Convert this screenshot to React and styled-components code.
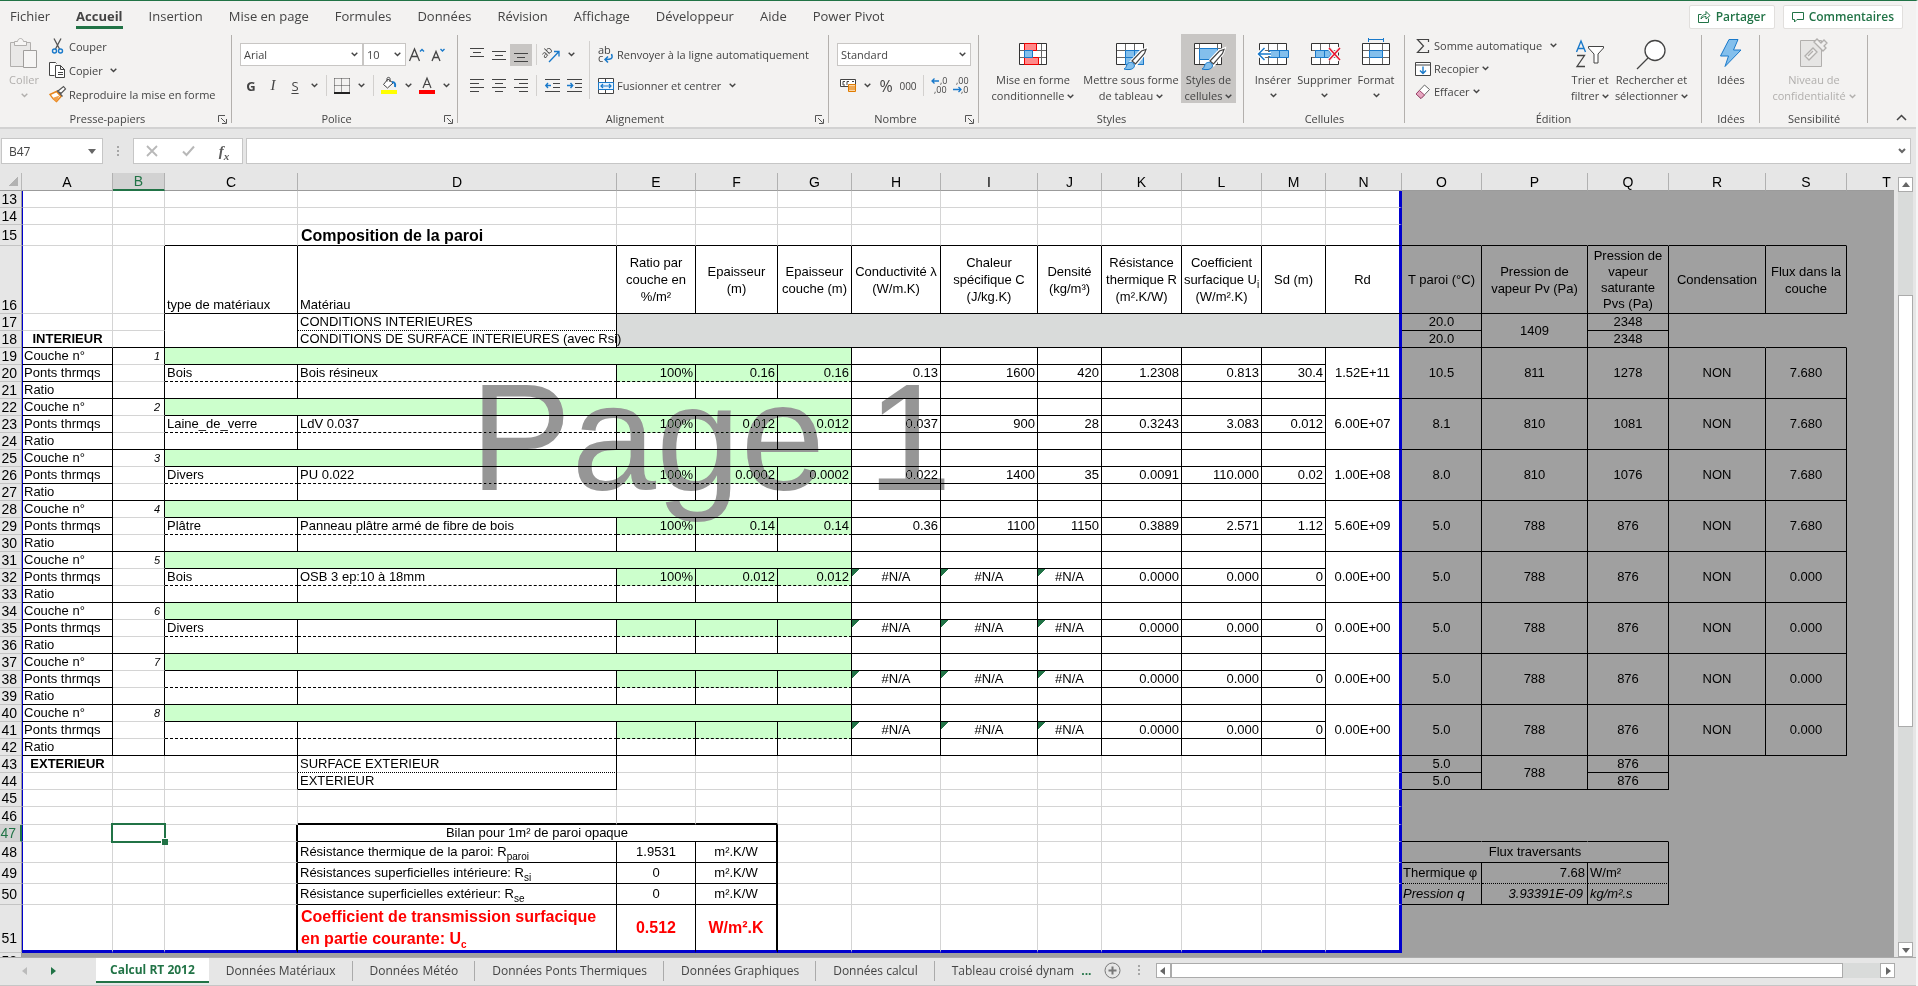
import React from 'react'
import styled, { createGlobalStyle, css } from 'styled-components'

const ui = `'Open Sans', 'Noto Sans', sans-serif`
const sheetFont = `'Liberation Sans', Arial, sans-serif`
const green = '#217346'
const blue = '#1979ca'

const GlobalStyle = createGlobalStyle`
*{ box-sizing: border-box; }
body{
  margin: 0;
  background: #e6e6e6;
  font-family: ${ui};
  font-size: 12px;
  color: #444;
}
button, input, select{
  font: inherit;
  color: inherit;
}
svg{ overflow: visible; }
`

const Window = styled.div`
display: flex;
flex-direction: column;
height: 100vh;
min-height: 600px;
overflow: hidden;
border-top: 1px solid ${green};
border-right: 2px solid #f6f6f6;
`

/* ---------- ribbon ---------- */

const Menu = styled.nav`
display: flex;
align-items: center;
flex-shrink: 0;
height: 33px;
padding: 0 13px 2px 10px;
background: #f3f2f1;
`
const MenuTabs = styled.div`
display: flex;
gap: 26px;
flex: 1;
font-size: 13px;
`
const MenuTab = styled.a`
position: relative;
padding-bottom: 2px;
line-height: 22px;
color: #444;
text-decoration: none;
white-space: nowrap;
font-weight: ${({ $active }) => ($active ? 700 : 400)};
${({ $active }) => $active && css`
&::after{
  content: '';
  position: absolute;
  left: 0;
  right: 0;
  bottom: 0;
  height: 3px;
  background: ${green};
}
`}
`
const TopButton = styled.button`
display: flex;
align-items: center;
gap: 5px;
height: 24px;
margin-left: 8px;
padding: 0 8px;
border: 1px solid #e1dfdd;
border-radius: 2px;
background: #fff;
color: ${green};
font-size: 12px;
font-weight: 600;
white-space: nowrap;
`
const Ribbon = styled.div`
display: flex;
height: 95px;
flex-shrink: 0;
background: #f3f2f1;
border-bottom: 2px solid #d2d2d2;
`
const Group = styled.section`
display: flex;
flex-direction: column;
width: ${({ $w }) => $w}px;
height: 93px;
flex-shrink: 0;
background: linear-gradient(#b3b0ad, #b3b0ad) no-repeat right 1px / 1px 88px;
`
const GroupBody = styled.div`
display: flex;
flex: 1;
padding: 0 ${({ $pad }) => $pad || 0}px;
`
const GroupFoot = styled.div`
display: flex;
align-items: center;
height: 16px;
padding-right: ${({ $launcher }) => ($launcher ? 2 : 0)}px;
font-size: 11px;
line-height: 16px;
`
const GroupLabel = styled.span`
flex: 1;
text-align: center;
`
const Launcher = styled.button`
display: flex;
padding: 3px;
border: 0;
background: none;
`
const Lines = styled.div`
display: flex;
flex-direction: column;
`
const Line = styled.div`
display: flex;
align-items: center;
height: 31px;
`
const ToolButton = styled.button`
display: flex;
align-items: center;
justify-content: center;
width: 22px;
height: 22px;
padding: 0;
border: 0;
background: ${({ $on }) => ($on ? '#c8c6c4' : 'none')};
`
const ArrowButton = styled(ToolButton)`
width: 16px;
`
const TextButton = styled.button`
display: flex;
align-items: center;
gap: 3px;
height: ${({ $h }) => $h || 24}px;
padding: 0;
border: 0;
background: none;
font-size: 11px;
white-space: nowrap;
`
const BigButton = styled.button`
display: flex;
flex-direction: column;
align-items: center;
width: ${({ $w }) => $w}px;
height: 69px;
padding: 4px 0 0;
border: 0;
background: ${({ $on }) => ($on ? '#c8c6c4' : 'none')};
color: ${({ $off }) => ($off ? '#b1afad' : '#444')};
font-size: 11px;
line-height: 16px;
white-space: nowrap;
& > svg{
  height: 34px;
  flex-shrink: 0;
}
`
const BigText = styled.span`
display: flex;
align-items: center;
gap: 3px;
height: 16px;
`
const Rule = styled.span`
width: 1px;
height: ${({ $h }) => $h || 21}px;
margin: 0 4px;
background: #d2d0ce;
flex-shrink: 0;
`
const SelectBox = styled.label`
position: relative;
display: block;
width: ${({ $w }) => $w}px;
& > svg{
  position: absolute;
  right: 5px;
  top: 9px;
  pointer-events: none;
}
`
const Select = styled.select`
width: 100%;
height: 23px;
padding: 0 3px;
appearance: none;
border: 1px solid #c8c6c4;
border-radius: 0;
background: #fff;
font-size: 11px;
`
const FontMark = styled.span`
font-size: ${({ $size }) => $size || 13}px;
font-weight: ${({ $bold }) => ($bold ? 700 : 400)};
font-style: ${({ $italic }) => ($italic ? 'italic' : 'normal')};
font-family: ${({ $serif }) => ($serif ? `'Liberation Serif', serif` : 'inherit')};
text-decoration: ${({ $under }) => ($under ? 'underline' : 'none')};
text-underline-offset: 2px;
`
const Collapse = styled.button`
margin: auto 9px 0 auto;
padding: 0 0 2px;
border: 0;
background: none;
`

/* ---------- formula bar ---------- */

const FormulaBar = styled.div`
display: flex;
align-items: center;
flex-shrink: 0;
height: 44px;
padding: 0 5px 0 1px;
`
const NameBox = styled.label`
position: relative;
width: 102px;
& > svg{
  position: absolute;
  right: 7px;
  top: 9px;
}
`
const BarInput = styled.input`
display: block;
width: 100%;
height: 26px;
padding: 0 7px;
border: 1px solid #c6c6c6;
border-radius: 0;
background: #fff;
font-size: 12px;
outline: none;
`
const BarDots = styled.span`
width: 2px;
height: 11px;
margin: 0 14px;
background: repeating-linear-gradient(#a6a6a6 0 2px, transparent 2px 4px);
`
const BarButtons = styled.div`
display: flex;
width: 110px;
height: 26px;
border: 1px solid #c6c6c6;
background: #fff;
`
const BarButton = styled.button`
display: flex;
align-items: center;
justify-content: center;
flex: 1;
padding: 0;
border: 0;
background: none;
color: #5a5a5a;
font-family: 'Liberation Serif', serif;
font-size: 15px;
font-style: italic;
font-weight: 700;
sub{
  font-size: 11px;
  line-height: 0;
}
`
const FormulaBox = styled.label`
position: relative;
flex: 1;
margin-left: 3px;
& > svg{
  position: absolute;
  right: 5px;
  top: 10px;
}
`

/* ---------- sheet ---------- */

const Work = styled.div`
display: flex;
flex: 1;
min-height: 0;
`
const SheetArea = styled.div`
position: relative;
flex: 1;
min-width: 0;
overflow: hidden;
background: #a0a0a0;
`
const Table = styled.table`
width: 0;
table-layout: fixed;
border-collapse: separate;
border-spacing: 0;
font-family: ${sheetFont};
font-size: 13px;
line-height: 16px;
color: #000;
`
const Corner = styled.td`
padding: 0;
background: linear-gradient(135deg, transparent 50%, #b2b2b2 50%) no-repeat 9px 4px / 9px 9px #e6e6e6;
border-right: 1px solid #b8b8b8;
border-bottom: 1px solid #9b9b9b;
`
const ColHead = styled.th`
height: 18px;
padding: 0;
overflow: hidden;
font-size: 14px;
font-weight: 400;
line-height: 16px;
color: ${({ $on }) => ($on ? green : '#000')};
background: ${({ $on }) => ($on ? '#d2d2d2' : '#e6e6e6')};
border-right: 1px solid #b1b1b1;
border-bottom: ${({ $on }) => ($on ? `2px solid ${green}` : '1px solid #9b9b9b')};
`
const RowHead = styled.th`
height: ${({ $h }) => $h}px;
padding: 0 4px ${({ $h }) => ($h === 48 ? 6 : 0)}px 0;
overflow: hidden;
font-size: 14px;
font-weight: 400;
text-align: right;
vertical-align: ${({ $h }) => ($h === 21 ? 'middle' : 'bottom')};
color: ${({ $on }) => ($on ? green : '#000')};
background: ${({ $on }) => ($on ? '#d2d2d2' : '#e6e6e6')};
border-bottom: 1px solid #c4c4c4;
border-right: ${({ $on }) => ($on ? `2px solid ${green}` : '1px solid #9b9b9b')};
`
const Cell = styled.td`
position: relative;
padding: 0 ${({ $pad }) => $pad || 2}px;
white-space: pre;
text-align: ${({ $align }) => $align || 'left'};
vertical-align: ${({ $valign }) => $valign || 'bottom'};
font-size: ${({ $size }) => $size || 13}px;
font-weight: ${({ $bold }) => ($bold ? 700 : 400)};
font-style: ${({ $italic }) => ($italic ? 'italic' : 'normal')};
line-height: ${({ $lh }) => $lh || 16}px;
color: ${({ $color }) => $color || '#000'};
background: ${({ $bg }) => $bg};
border-right: ${({ $right }) => $right};
border-bottom: ${({ $bottom }) => $bottom};
border-left: ${({ $left }) => $left || 0};
sub{
  font-size: 10px;
  line-height: 0;
}
${({ $error }) => $error && css`
background: linear-gradient(135deg, ${green} 5px, #fff 5px);
`}
`
const Selection = styled.span`
position: absolute;
inset: -2px;
z-index: 1;
border: 2px solid ${green};
&::after{
  content: '';
  position: absolute;
  right: -4px;
  bottom: -4px;
  width: 6px;
  height: 6px;
  border: 1px solid #fff;
  border-right: 0;
  border-bottom: 0;
  background: ${green};
}
`
const Watermark = styled.div`
position: absolute;
left: 470px;
top: 179px;
font-family: ${sheetFont};
font-size: 152px;
line-height: 170px;
color: #969696;
mix-blend-mode: darken;
pointer-events: none;
`

const VScroll = styled.div`
display: flex;
flex-direction: column;
width: 15px;
margin: 4px 3px 0 4px;
background: #d9dbda;
`
const HScroll = styled.div`
display: flex;
flex: 1;
height: 15px;
margin: 0 21px 0 2px;
background: #d9dbda;
`
const ScrollButton = styled.button`
display: flex;
align-items: center;
justify-content: center;
width: 15px;
height: 15px;
padding: 0;
border: 1px solid #ababab;
background: #fff;
flex-shrink: 0;
`
const Thumb = styled.div`
flex: ${({ $size }) => $size} 0 0;
border: 1px solid #ababab;
background: #fff;
`
const Track = styled.div`
flex: ${({ $size }) => $size} 0 0;
`

const Sheets = styled.footer`
display: flex;
align-items: center;
flex-shrink: 0;
height: 29px;
padding-bottom: 2px;
border-top: 1px solid #ababab;
border-bottom: 1px solid #c6c6c6;
`
const SheetNav = styled.div`
display: flex;
gap: 6px;
width: 96px;
padding-left: 14px;
`
const SheetTab = styled.a`
display: flex;
align-items: center;
height: 24px;
padding: 0 17px;
color: #444;
font-size: 12px;
text-decoration: none;
white-space: nowrap;
background: linear-gradient(#ababab, #ababab) no-repeat right center / 1px 20px;
&:last-of-type{
  padding-right: 7px;
  background: none;
}
${({ $active }) => $active && css`
align-self: flex-start;
height: 25px;
padding: 0 14px;
border-bottom: 2px solid ${green};
background: #fff;
color: ${green};
font-weight: 700;
`}
`
const More = styled.span`
margin-right: 10px;
color: ${green};
font-weight: 700;
`

/* ---------- icons ---------- */

const Chevron = ({ color = '#444' }) => (
  <svg width="7" height="5" viewBox="0 0 7 5" fill="none" stroke={color} strokeWidth="1.4"><path d="M.7.8 3.5 3.6 6.3.8" /></svg>
)
const Triangle = ({ dir, color = '#666' }) => {
  const d = { up: 'M0 6 4 1 8 6z', down: 'M0 2 4 7 8 2z', left: 'M6 0 1 4 6 8z', right: 'M2 0 7 4 2 8z' }[dir]
  return <svg width="8" height="8" viewBox="0 0 8 8"><path d={d} fill={color} /></svg>
}
const LauncherIcon = () => (
  <svg width="9" height="9" viewBox="0 0 9 9" fill="none" stroke="#555"><path d="M.5 7V.5H7M3 3l4.5 4.5M8.5 4v4.5H4" /></svg>
)
const PasteIcon = () => (
  <svg width="28" height="34" viewBox="0 0 28 34" fill="#e9e8e7" stroke="#b1afad">
    <path d="M.5 4.500h20v24H.5z" />
    <path d="M4.500 7.500v-4h3c.5-4 5.500-4 6 0h3v4z" fill="#f6f5f4" />
    <path d="M13.500 12.500h13v17h-13z" fill="#f6f5f4" stroke="#a09e9c" />
  </svg>
)
const CutIcon = () => (
  <svg width="17" height="17" viewBox="0 0 17 17" fill="none">
    <path d="M5 .5 10.500 11M12 .5 6.500 11" stroke="#555" strokeWidth="1.300" />
    <circle cx="5.500" cy="13" r="2" stroke={blue} strokeWidth="1.400" />
    <circle cx="11.500" cy="13" r="2" stroke={blue} strokeWidth="1.400" />
  </svg>
)
const CopyIcon = () => (
  <svg width="17" height="17" viewBox="0 0 17 17" fill="#fff" stroke="#444">
    <path d="M5.500 13.500h-5V.5h6l1 1" />
    <path d="M6.500 3.500h5l4 4v8h-9zM11.500 3.500v4h4M9 10.500h5M9 12.500h5" />
  </svg>
)
const BrushIcon = () => (
  <svg width="17" height="17" viewBox="0 0 17 17">
    <path d="M1 8.500 7.500 5.500l4.500 5-4.500 5C5 14 3 12 1 8.500z" fill="#fff" stroke="#e8871e" strokeWidth="1.500" />
    <path d="M3.500 12l7-2.500-3 6z" fill="#f2a04a" />
    <path d="M8 4.500 10.500 7l3 3.500M9 5l5.500-4.500L16.500 3 12 7.500z" fill="#fff" stroke="#555" strokeWidth="1.200" />
  </svg>
)
const BordersIcon = () => (
  <svg width="16" height="16" viewBox="0 0 16 16" fill="none" stroke="#444">
    <path d="M.5.500h15M.5 7.500h15M.5.500v14M7.500.500v14M15.500.500v14" strokeDasharray="1 1" />
    <path d="M0 15h16" strokeWidth="2" stroke="#222" />
  </svg>
)
const FillIcon = () => (
  <svg width="17" height="17" viewBox="0 0 17 17" fill="none">
    <path d="M7 2 2.500 7.500 6.500 11 12 6zM6 4.500V1.500C6 0 9 0 9 1.500V5" fill="#fff" stroke="#444" />
    <path d="M11 5c3 0 3.500 2 3 5" stroke={blue} strokeWidth="2" />
    <path d="M0 13h16v4H0z" fill="#ff0" />
  </svg>
)
const FontColorIcon = () => (
  <svg width="16" height="17" viewBox="0 0 16 17" fill="none">
    <path d="M4 11 8 1l4 10M5.500 7.500h5" stroke="#444" strokeWidth="1.200" />
    <path d="M0 13h16v4H0z" fill="#f00" />
  </svg>
)
const GrowIcon = ({ shrink }) => (
  <svg width="17" height="16" viewBox="0 0 17 16" fill="none">
    {shrink
      ? <path d="M1 14 5 4.500 9 14M2.500 10.500h5" stroke="#444" strokeWidth="1.300" />
      : <path d="M.5 14 5.500 2l5 12M2.500 9.500h6" stroke="#444" strokeWidth="1.300" />}
    <path d={shrink ? 'M9.500 2 11.500 4l2-2' : 'M11 4.500l2-2 2 2'} stroke={blue} strokeWidth="1.400" />
  </svg>
)
const BarsIcon = ({ lines }) => (
  <svg width="14" height="14" viewBox="0 0 14 14" stroke="#444">
    {lines.map(([a, b, y]) => <path key={y} d={`M${a} ${y}.500H${b}`} />)}
  </svg>
)
const IndentIcon = ({ out }) => (
  <svg width="15" height="14" viewBox="0 0 15 14" fill="none" stroke="#444">
    <path d="M0 .5h15M8 4.500h7M8 8.500h7M0 12.500h15" />
    <path d={out ? 'M6 6.500H1M3 4 .8 6.500 3 9' : 'M0 6.500h5.500M3.500 4l2.200 2.500L3.500 9'} stroke={blue} strokeWidth="1.400" />
  </svg>
)
const SvgText = styled.text`
font-family: ${ui};
font-size: ${({ $size }) => $size}px;
fill: #444;
`
const OrientIcon = () => (
  <svg width="18" height="18" viewBox="0 0 18 18" fill="none">
    <SvgText $size={10} transform="translate(4 12) rotate(-45)" x="-2" y="-1">ab</SvgText>
    <path d="M6 16 15.500 6M11 5.500h5v5" stroke={blue} strokeWidth="1.300" />
  </svg>
)
const WrapIcon = () => (
  <svg width="16" height="17" viewBox="0 0 16 17" fill="none">
    <SvgText $size={11} x="0" y="8">ab</SvgText>
    <SvgText $size={11} x="0" y="16">c</SvgText>
    <path d="M13.500 8c2 5-1 5.500-6 5.500M10 10.500 7 13.500l3 3" stroke={blue} strokeWidth="1.500" />
  </svg>
)
const MergeIcon = () => (
  <svg width="16" height="16" viewBox="0 0 16 16" fill="none">
    <path d="M.5.500h15v15H.5zM7.500 1v3M7.500 12v3" fill="#fff" stroke="#444" />
    <path d="M.5 4.500h15v7H.5z" fill="#e8f3fc" stroke={blue} />
    <path d="M3 8h10M5 6 3 8l2 2M11 6l2 2-2 2" stroke={blue} strokeWidth="1.200" />
  </svg>
)
const MoneyIcon = () => (
  <svg width="17" height="15" viewBox="0 0 17 15" fill="none">
    <path d="M.5 1.500h15v7H.5z" fill="#fff" stroke="#444" />
    <path d="M5 3.500H3v3.500h2M7 7V3.500h2M12 3.500h2" stroke="#444" />
    <path d="M8.500 6.500h7v7h-7zM8.500 9h7M8.500 11h7" fill="#fbd6a6" stroke="#e07b00" />
  </svg>
)
const DecimalIcon = ({ less }) => (
  <svg width="17" height="17" viewBox="0 0 17 17" fill="none">
    <SvgText $size={9} x={less ? 3 : 9} y="7">{less ? ',00' : ',0'}</SvgText>
    <SvgText $size={9} x={less ? 8 : 3} y="16">{less ? ',0' : ',00'}</SvgText>
    <path d={less ? 'M0 12.500h8M5.500 10 8 12.500 5.500 15' : 'M8 4H1M3.500 1.500 1 4l2.500 2.500'} stroke={blue} strokeWidth="1.300" />
  </svg>
)
const TableGrid = () => (
  <>
    <path d="M1.500 5.500h27v21h-27z" fill="#fff" stroke="#333" />
    <path d="M2 12.500h26M2 19.500h26M10.500 6v20M19.500 6v20" stroke="#666" />
  </>
)
const PaintBrush = () => (
  <>
    <path d="M16 24 26 13l5-2-1.500 4.500L20.500 27z" fill="#fff" stroke="#fff" strokeWidth="3" />
    <path d="M17 23 26.500 13l4.500-1.500-1.500 4L20.500 26z" fill="#fff" stroke="#444" strokeWidth="1.200" />
    <path d="M9 31c2-1 2-2 3-4.500 1.500-2.500 5-3 7-.5 1.500 3-1 5-4 5.500-2 .3-4 0-6-.5z" fill="#83bfec" stroke={blue} />
  </>
)
const CondFormatIcon = () => (
  <svg width="30" height="34" viewBox="0 0 30 34" fill="none">
    <path d="M1.500 5.500h27v21h-27z" fill="#fff" stroke="#333" />
    <path d="M2 12.500h26M2 19.500h26M6.500 6v20M23.500 6v20" stroke="#666" />
    <path d="M6.500 5.500h12v7h-12zM6.500 19.500h14v7h-14z" fill="#ff8a8a" stroke="#e00" />
    <path d="M6.500 12.500h8v7h-8z" fill="#83bfec" stroke={blue} />
  </svg>
)
const TableFormatIcon = () => (
  <svg width="32" height="34" viewBox="0 0 32 34" fill="none">
    <TableGrid />
    <path d="M10.500 12.500h18v14h-18zM10.500 19.500h18M19.500 12.500v14" fill="#83bfec" stroke={blue} />
    <PaintBrush />
  </svg>
)
const CellStyleIcon = () => (
  <svg width="32" height="34" viewBox="0 0 32 34" fill="none">
    <path d="M1.500 5.500h27v21h-27z" fill="#fff" stroke="#333" />
    <path d="M6.500 6v20M2 10.500h26M24.500 6v20" stroke="#666" />
    <path d="M6.500 10.500h18v11h-18z" fill="#83bfec" stroke={blue} />
    <PaintBrush />
  </svg>
)
const InsertIcon = () => (
  <svg width="32" height="34" viewBox="0 0 32 34" fill="none">
    <path d="M2.500 5.500h27v21h-27z" fill="#fff" stroke="#333" />
    <path d="M3 12.500h26M3 19.500h26M11.500 6v20M20.500 6v20" stroke="#666" />
    <path d="M12.500 12.500h19v7h-19zM22.500 12.500v7" fill="#83bfec" stroke={blue} />
    <path d="M14 16H1.500M7.500 10 1.500 16l6 6" stroke="#fff" strokeWidth="4" />
    <path d="M14 16H1.500M7.500 10 1.500 16l6 6" stroke={blue} strokeWidth="1.500" />
  </svg>
)
const DeleteIcon = () => (
  <svg width="32" height="34" viewBox="0 0 32 34" fill="none">
    <path d="M2.500 5.500h27v21h-27z" fill="#fff" stroke="#333" />
    <path d="M3 12.500h26M3 19.500h26M11.500 6v20M20.500 6v20" stroke="#666" />
    <path d="M0 13h6v6H0z" fill="#f3f2f1" />
    <path d="M6.500 12.500h13l3 3.500-3 3.500h-13zM15.500 12.500v7" fill="#83bfec" stroke={blue} />
    <path d="M20 10 31 22M31 10 20 22" stroke="#f3f2f1" strokeWidth="4" />
    <path d="M20 10 31 22M31 10 20 22" stroke="#e8112d" strokeWidth="1.500" />
  </svg>
)
const FormatIcon = () => (
  <svg width="30" height="34" viewBox="0 0 30 34" fill="none">
    <path d="M1.500 5.500h27v21h-27z" fill="#fff" stroke="#333" />
    <path d="M2 12.500h26M2 19.500h26M8.500 6v20M21.500 6v20" stroke="#666" />
    <path d="M8.500 12.500h13v7h-13z" fill="#83bfec" stroke={blue} />
    <path d="M7.500 0v4M22.500 0v4M8 1.500h14" stroke={blue} />
  </svg>
)
const SumIcon = () => (
  <svg width="16" height="16" viewBox="0 0 16 16" fill="none" stroke="#444" strokeWidth="1.200"><path d="M13.500 4V1.500h-11L8.500 8l-6 6.500h11V12" /></svg>
)
const RecopyIcon = () => (
  <svg width="16" height="14" viewBox="0 0 16 14" fill="none">
    <path d="M.5.500h15v13H.5zM.5 3h15" fill="#fff" stroke="#444" />
    <path d="M8 4.500v7M5 8.500l3 3 3-3" stroke={blue} strokeWidth="1.400" />
  </svg>
)
const EraserIcon = () => (
  <svg width="16" height="16" viewBox="0 0 16 16">
    <path d="M9.500 1 14.500 5.500 6 14.500 1 10z" fill="#fff" stroke="#666" />
    <path d="M4.500 6.500 9.500 11 6 14.500 1 10z" fill="#e6a6c0" stroke="#a0466e" />
  </svg>
)
const SortIcon = () => (
  <svg width="30" height="34" viewBox="0 0 30 34" fill="none">
    <path d="M1.500 14 6 3l4.500 11M3 10.500h6" stroke={blue} strokeWidth="1.400" />
    <path d="M2 17.500h7.500L2 28.500h8" stroke="#444" strokeWidth="1.300" />
    <path d="M13.500 8.500h15v1.500l-5.500 6v9h-4v-9l-5.500-6z" fill="#fff" stroke="#444" />
  </svg>
)
const FindIcon = () => (
  <svg width="32" height="34" viewBox="0 0 32 34" fill="none" stroke="#444" strokeWidth="1.300">
    <circle cx="20" cy="12.500" r="10" fill="#fff" />
    <path d="M13 20 2 31" />
  </svg>
)
const IdeasIcon = () => (
  <svg width="24" height="34" viewBox="0 0 24 34">
    <path d="M10 1.500h9L14.500 12H22L6 28.500 9.500 18H1.500z" fill="#83bfec" stroke={blue} />
  </svg>
)
const SensitivityIcon = () => (
  <svg width="30" height="34" viewBox="0 0 30 34" fill="#e6e5e4" stroke="#b1afad">
    <path d="M1.500 2.500h21v26h-21z" />
    <path d="M6 18 14 10l4 4-8 8zM9 18l5-5M15 4l3-3 4 4 3-3 3 3-3 3 2 2-3 3z" fill="#f0efee" strokeWidth="1.300" />
  </svg>
)
const ShareIcon = () => (
  <svg width="13" height="13" viewBox="0 0 13 13" fill="none" stroke={green}>
    <path d="M3.500 4.500h-3v8h10v-4" />
    <path d="M3 9c.5-3.500 2.500-4.500 5-4.500v-3L12 5.500 8 9V6.500C6 6.500 4.500 7 3 9z" />
  </svg>
)
const CommentIcon = () => (
  <svg width="12" height="12" viewBox="0 0 12 12" fill="none" stroke={green}><path d="M.5 1.500h11v7H5L2.500 11V8.500h-2z" /></svg>
)

/* ---------- sheet data ---------- */

const columns = [
  ['A', 91], ['B', 52], ['C', 133], ['D', 319], ['E', 79], ['F', 82], ['G', 74], ['H', 89], ['I', 97], ['J', 64],
  ['K', 80], ['L', 80], ['M', 64], ['N', 76], ['O', 80], ['P', 106], ['Q', 81], ['R', 97], ['S', 81], ['T', 80],
]
const letters = columns.map(([name]) => name)
const heights = { 15: 21, 16: 68, 46: 18, 48: 21, 49: 21, 50: 21, 51: 48 }
const rowNumbers = Array.from({ length: 40 }, (_, i) => i + 13)

const line = '1px solid #000'
const thick = '2px solid #000'
const dashed = '1px dashed #000'
const dotted = '1px dotted #000'
const page = '3px solid #0000cd'
const grey = '#a0a0a0'
const mint = '#ccffcc'

const cells = {}
const set = (range, props) => {
  const [from, to = from] = range.split(':')
  const c1 = letters.indexOf(from[0])
  const c2 = letters.indexOf(to[0])
  for (let r = +from.slice(1); r <= +to.slice(1); r++) {
    for (let c = c1; c <= c2; c++) cells[letters[c] + r] = { ...cells[letters[c] + r], ...props }
  }
}
const merge = (range, props) => {
  const [from, to] = range.split(':')
  set(range, { hidden: true })
  set(from, {
    hidden: false,
    colSpan: letters.indexOf(to[0]) - letters.indexOf(from[0]) + 1,
    rowSpan: to.slice(1) - from.slice(1) + 1,
    ...props,
  })
}
const box = { right: line, bottom: line }
const mid = { align: 'center', valign: 'middle' }

set('A13:N51', { bg: '#fff', right: '1px solid #d4d4d4', bottom: '1px solid #d4d4d4' })
set('O13:T51', { bg: grey, right: `1px solid ${grey}`, bottom: `1px solid ${grey}` })
set('A52:T52', { bg: grey, right: 0, bottom: 0 })
set('A13:A51', { left: '1px solid #0000cd', pad: 1 })

set('D15', { v: 'Composition de la paroi', size: 16, bold: true, pad: 3, lh: 19 })
set('C15:S15', { bottom: line })
set('C16:S16', { ...box, ...mid })
set('B16:B42', { right: line })
set('C16', { v: 'type de matériaux', align: 'left', valign: 'bottom' })
set('D16', { v: 'Matériau', align: 'left', valign: 'bottom' })
const heads = {
  E: 'Ratio par\ncouche en\n%/m²', F: 'Epaisseur\n(m)', G: 'Epaisseur\ncouche (m)', H: 'Conductivité λ\n(W/m.K)',
  I: 'Chaleur\nspécifique C\n(J/kg.K)', J: 'Densité\n(kg/m³)', K: 'Résistance\nthermique R\n(m².K/W)',
  L: <>Coefficient{'\n'}surfacique U<sub>i</sub>{'\n'}(W/m².K)</>, M: 'Sd (m)', N: 'Rd', O: 'T paroi (°C)',
  P: 'Pression de\nvapeur Pv (Pa)', Q: 'Pression de\nvapeur\nsaturante\nPvs (Pa)', R: 'Condensation', S: 'Flux dans la\ncouche',
}
Object.entries(heads).forEach(([c, v]) => set(c + 16, { v, pad: 1, lh: c === 'Q' ? 16 : 17 }))

merge('C17:C18', box)
set('D17', { v: 'CONDITIONS INTERIEURES', right: line, bottom: dotted })
set('D18', { v: 'CONDITIONS DE SURFACE INTERIEURES (avec Rsi)', ...box })
merge('E17:N18', { bg: '#d9dbda', bottom: line })
set('A18', { v: 'INTERIEUR', bold: true, align: 'center' })
set('A18:B18', { bottom: line })
set('R18:S18', { bottom: line })
set('A43', { v: 'EXTERIEUR', bold: true, align: 'center' })

const ends = (top, t, pv, pvs) => {
  const next = top + 1
  set(`O${top}:O${next}`, { v: t, align: 'center', ...box })
  merge(`P${top}:P${next}`, { v: pv, ...mid, ...box })
  set(`Q${top}:Q${next}`, { v: pvs, align: 'center', ...box })
}
ends(17, '20.0', '1409', '2348')
ends(43, '5.0', '788', '876')

const na = '#N/A'
const layers = [
  ['Bois', 'Bois résineux', '100%', '0.16', '0.16', '0.13', '1600', '420', '1.2308', '0.813', '30.4', '1.52E+11', '10.5', '811', '1278', 'NON', '7.680'],
  ['Laine_de_verre', 'LdV 0.037', '100%', '0.012', '0.012', '0.037', '900', '28', '0.3243', '3.083', '0.012', '6.00E+07', '8.1', '810', '1081', 'NON', '7.680'],
  ['Divers', 'PU 0.022', '100%', '0.0002', '0.0002', '0.022', '1400', '35', '0.0091', '110.000', '0.02', '1.00E+08', '8.0', '810', '1076', 'NON', '7.680'],
  ['Plâtre', 'Panneau plâtre armé de fibre de bois', '100%', '0.14', '0.14', '0.36', '1100', '1150', '0.3889', '2.571', '1.12', '5.60E+09', '5.0', '788', '876', 'NON', '7.680'],
  ['Bois', 'OSB 3 ep:10 à 18mm', '100%', '0.012', '0.012', na, na, na, '0.0000', '0.000', '0', '0.00E+00', '5.0', '788', '876', 'NON', '0.000'],
  ['Divers', '', '', '', '', na, na, na, '0.0000', '0.000', '0', '0.00E+00', '5.0', '788', '876', 'NON', '0.000'],
  ['', '', '', '', '', na, na, na, '0.0000', '0.000', '0', '0.00E+00', '5.0', '788', '876', 'NON', '0.000'],
  ['', '', '', '', '', na, na, na, '0.0000', '0.000', '0', '0.00E+00', '5.0', '788', '876', 'NON', '0.000'],
]
layers.forEach((layer, i) => {
  const r = 19 + i * 3
  set(`A${r}:A${r + 2}`, box)
  set(`A${r}`, { v: 'Couche n°' })
  set(`A${r + 1}`, { v: 'Ponts thrmqs' })
  set(`A${r + 2}`, { v: 'Ratio' })
  set(`B${r}`, { v: String(i + 1), italic: true, size: 11, align: 'right', pad: 4 })
  set(`B${r + 2}`, { bottom: line })
  merge(`C${r}:G${r}`, { bg: mint, ...box })
  set(`C${r + 1}:G${r + 1}`, { right: line, bottom: dashed })
  set(`E${r + 1}:G${r + 1}`, { bg: mint })
  set(`C${r + 2}:G${r + 2}`, box)
  set(`H${r}:M${r + 2}`, box)
  layer.forEach((v, j) => {
    const c = letters[j + 2]
    if (j < 11) {
      set(c + (r + 1), { v, align: v === na ? 'center' : j < 2 ? 'left' : 'right', error: v === na })
    } else {
      merge(`${c}${r}:${c}${r + 2}`, { v, ...mid, ...box })
    }
  })
})

set('C43:C44', { right: line })
set('D43', { v: 'SURFACE EXTERIEUR', right: line, bottom: dotted })
set('D44', { v: 'EXTERIEUR', ...box })

set('D46:F46', { bottom: thick })
set('C47:C51', { right: thick })
merge('D47:F47', { v: 'Bilan pour 1m² de paroi opaque', align: 'center', right: thick, bottom: line })
const results = [
  [<>Résistance thermique de la paroi: R<sub>paroi</sub></>, '1.9531'],
  [<>Résistances superficielles intérieure: R<sub>si</sub></>, '0'],
  [<>Résistance superficielles extérieur: R<sub>se</sub></>, '0'],
]
results.forEach(([label, value], i) => {
  const r = 48 + i
  set(`D${r}`, { v: label, valign: 'middle', ...box })
  set(`E${r}`, { v: value, ...mid, ...box })
  set(`F${r}`, { v: 'm².K/W', ...mid, right: thick, bottom: line })
})
const red = { bold: true, size: 16, color: '#f00', right: line, valign: 'middle' }
set('D51', { ...red, pad: 3, lh: 22, v: <>Coefficient de transmission surfacique{'\n'}en partie courante: U<sub>c</sub></> })
set('E51', { ...red, v: '0.512', align: 'center' })
set('F51', { ...red, v: 'W/m².K', align: 'center', right: thick })

set('O47:Q47', { bottom: line })
merge('O48:Q48', { v: 'Flux traversants', ...mid, ...box })
set('O49:Q49', { right: line, bottom: dotted, valign: 'middle' })
set('O50:Q50', { ...box, italic: true, valign: 'middle' })
set('O49', { v: 'Thermique φ', pad: 1 })
set('P49', { v: '7.68', align: 'right' })
set('Q49', { v: 'W/m²' })
set('O50', { v: 'Pression q', pad: 1 })
set('P50', { v: '3.93391E-09', align: 'right', pad: 4 })
set('Q50', { v: 'kg/m².s' })

set('A51:N51', { bottom: page })
set('N13:N51', { right: page })
cells.E17.right = page
set('B47', { selected: true })

const SheetCell = ({ id }) => {
  const { v, colSpan, rowSpan, selected, hidden, ...rest } = cells[id]
  if (hidden) return null
  const props = Object.fromEntries(Object.entries(rest).map(([k, value]) => ['$' + k, value]))
  return (
    <Cell colSpan={colSpan} rowSpan={rowSpan} {...props}>
      {v}
      {selected && <Selection />}
    </Cell>
  )
}

const Sheet = () => (
  <SheetArea>
    <Table>
      <colgroup>
        <col width="22" />
        {columns.map(([name, w]) => <col key={name} width={w} />)}
      </colgroup>
      <thead>
        <tr>
          <Corner />
          {letters.map((name) => <ColHead key={name} scope="col" $on={name === 'B'}>{name}</ColHead>)}
        </tr>
      </thead>
      <tbody>
        {rowNumbers.map((r) => (
          <tr key={r}>
            <RowHead scope="row" $h={heights[r] || 17} $on={r === 47}>{r}</RowHead>
            {letters.map((c) => <SheetCell key={c} id={c + r} />)}
          </tr>
        ))}
      </tbody>
    </Table>
    <Watermark>Page 1</Watermark>
  </SheetArea>
)

const alignTop = [
  ['Aligner en haut', [[0, 14, 0], [3, 11, 4], [0, 14, 8]]],
  ['Aligner au centre', [[0, 14, 3], [3, 11, 7], [0, 14, 11]]],
  ['Aligner en bas', [[0, 14, 5], [3, 11, 9], [0, 14, 13]]],
]
const alignSide = [
  ['Aligner à gauche', [[0, 14, 0], [0, 9, 4], [0, 14, 8], [0, 9, 12]]],
  ['Centrer', [[0, 14, 0], [3, 11, 4], [0, 14, 8], [3, 11, 12]]],
  ['Aligner à droite', [[0, 14, 0], [5, 14, 4], [0, 14, 8], [5, 14, 12]]],
]

const RibbonGroup = ({ w, pad, label, launcher, children }) => (
  <Group $w={w}>
    <GroupBody $pad={pad}>{children}</GroupBody>
    <GroupFoot $launcher={launcher}>
      <GroupLabel>{label}</GroupLabel>
      {launcher && <Launcher aria-label={`Options ${label}`}><LauncherIcon /></Launcher>}
    </GroupFoot>
  </Group>
)

const Big = ({ icon, lines, w, on, off, arrow }) => (
  <BigButton $w={w} $on={on} $off={off}>
    {icon}
    {lines.map((text, i) => (
      <BigText key={text}>{text}{arrow && i === 1 && <Chevron color={off ? '#b1afad' : '#444'} />}</BigText>
    ))}
    {arrow && lines.length === 1 && <BigText><Chevron color={off ? '#b1afad' : '#444'} /></BigText>}
  </BigButton>
)

const ToolLines = styled(Lines)`
padding-top: 5px;
`
const ClipLines = styled(Lines)`
padding-left: 1px;
`
const EditLines = styled(Lines)`
width: 156px;
`
const WideRule = styled(Rule)`
margin-top: 7px;
`
const WrapLines = styled(ToolLines)`
padding-left: 4px;
`

const menu = ['Fichier', 'Accueil', 'Insertion', 'Mise en page', 'Formules', 'Données', 'Révision', 'Affichage', 'Développeur', 'Aide', 'Power Pivot']
const sheets = ['Calcul RT 2012', 'Données Matériaux', 'Données Météo', 'Données Ponts Thermiques', 'Données Graphiques', 'Données calcul', 'Tableau croisé dynam']

const App = () => {
  return (
    <Window>
      <GlobalStyle />
      <Menu>
        <MenuTabs>
          {menu.map((name) => <MenuTab key={name} href="#" $active={name === 'Accueil'}>{name}</MenuTab>)}
        </MenuTabs>
        <TopButton><ShareIcon />Partager</TopButton>
        <TopButton><CommentIcon />Commentaires</TopButton>
      </Menu>

      <Ribbon>
        <RibbonGroup w={232} label="Presse-papiers" launcher>
          <Big w={48} icon={<PasteIcon />} lines={['Coller']} off arrow />
          <ClipLines>
            <TextButton><CutIcon />Couper</TextButton>
            <TextButton><CopyIcon />Copier<ArrowButton as="span"><Chevron /></ArrowButton></TextButton>
            <TextButton><BrushIcon />Reproduire la mise en forme</TextButton>
          </ClipLines>
        </RibbonGroup>

        <RibbonGroup w={226} pad={8} label="Police" launcher>
          <ToolLines>
            <Line>
              <SelectBox $w={123}><Select aria-label="Police"><option>Arial</option></Select><Chevron /></SelectBox>
              <SelectBox $w={43}><Select aria-label="Taille"><option>10</option></Select><Chevron /></SelectBox>
              <ToolButton aria-label="Agrandir la police"><GrowIcon /></ToolButton>
              <ToolButton aria-label="Réduire la police"><GrowIcon shrink /></ToolButton>
            </Line>
            <Line>
              <ToolButton aria-label="Gras"><FontMark $bold>G</FontMark></ToolButton>
              <ToolButton aria-label="Italique"><FontMark $italic $serif $size={15}>I</FontMark></ToolButton>
              <ToolButton aria-label="Souligné"><FontMark $under>S</FontMark></ToolButton>
              <ArrowButton aria-label="Options de soulignement"><Chevron /></ArrowButton>
              <Rule />
              <ToolButton aria-label="Bordures"><BordersIcon /></ToolButton>
              <ArrowButton aria-label="Options de bordures"><Chevron /></ArrowButton>
              <Rule />
              <ToolButton aria-label="Couleur de remplissage"><FillIcon /></ToolButton>
              <ArrowButton aria-label="Options de remplissage"><Chevron /></ArrowButton>
              <ToolButton aria-label="Couleur de police"><FontColorIcon /></ToolButton>
              <ArrowButton aria-label="Options de couleur"><Chevron /></ArrowButton>
            </Line>
          </ToolLines>
        </RibbonGroup>

        <RibbonGroup w={371} pad={8} label="Alignement" launcher>
          <ToolLines>
            <Line>
              {alignTop.map(([name, lines], i) => <ToolButton key={name} aria-label={name} $on={i === 2}><BarsIcon lines={lines} /></ToolButton>)}
              <Rule />
              <ToolButton aria-label="Orientation"><OrientIcon /></ToolButton>
              <ArrowButton aria-label="Options d'orientation"><Chevron /></ArrowButton>
            </Line>
            <Line>
              {alignSide.map(([name, lines]) => <ToolButton key={name} aria-label={name}><BarsIcon lines={lines} /></ToolButton>)}
              <Rule />
              <ToolButton aria-label="Diminuer le retrait"><IndentIcon out /></ToolButton>
              <ToolButton aria-label="Augmenter le retrait"><IndentIcon /></ToolButton>
            </Line>
          </ToolLines>
          <WideRule $h={58} />
          <WrapLines>
            <Line><TextButton><WrapIcon />Renvoyer à la ligne automatiquement</TextButton></Line>
            <Line><TextButton><MergeIcon />Fusionner et centrer<ArrowButton as="span"><Chevron /></ArrowButton></TextButton></Line>
          </WrapLines>
        </RibbonGroup>

        <RibbonGroup w={150} pad={8} label="Nombre" launcher>
          <ToolLines>
            <Line>
              <SelectBox $w={134}><Select aria-label="Format de nombre"><option>Standard</option></Select><Chevron /></SelectBox>
            </Line>
            <Line>
              <ToolButton aria-label="Format comptabilité"><MoneyIcon /></ToolButton>
              <ArrowButton aria-label="Options comptabilité"><Chevron /></ArrowButton>
              <ToolButton aria-label="Pourcentage"><FontMark $size={16}>%</FontMark></ToolButton>
              <ToolButton aria-label="Milliers"><FontMark $size={10}>000</FontMark></ToolButton>
              <Rule />
              <ToolButton aria-label="Ajouter une décimale"><DecimalIcon /></ToolButton>
              <ToolButton aria-label="Réduire les décimales"><DecimalIcon less /></ToolButton>
            </Line>
          </ToolLines>
        </RibbonGroup>

        <RibbonGroup w={265} pad={6} label="Styles">
          <Big w={96} icon={<CondFormatIcon />} lines={['Mise en forme', 'conditionnelle']} arrow />
          <Big w={100} icon={<TableFormatIcon />} lines={['Mettre sous forme', 'de tableau']} arrow />
          <Big w={55} icon={<CellStyleIcon />} lines={['Styles de', 'cellules']} on arrow />
        </RibbonGroup>

        <RibbonGroup w={161} pad={6} label="Cellules">
          <Big w={46} icon={<InsertIcon />} lines={['Insérer']} arrow />
          <Big w={57} icon={<DeleteIcon />} lines={['Supprimer']} arrow />
          <Big w={46} icon={<FormatIcon />} lines={['Format']} arrow />
        </RibbonGroup>

        <RibbonGroup w={297} pad={10} label="Édition">
          <EditLines>
            <TextButton $h={23}><SumIcon />Somme automatique<ArrowButton as="span"><Chevron /></ArrowButton></TextButton>
            <TextButton $h={23}><RecopyIcon />Recopier<Chevron /></TextButton>
            <TextButton $h={23}><EraserIcon />Effacer<Chevron /></TextButton>
          </EditLines>
          <Big w={42} icon={<SortIcon />} lines={['Trier et', 'filtrer']} arrow />
          <Big w={82} icon={<FindIcon />} lines={['Rechercher et', 'sélectionner']} arrow />
        </RibbonGroup>

        <RibbonGroup w={58} pad={6} label="Idées">
          <Big w={46} icon={<IdeasIcon />} lines={['Idées']} />
        </RibbonGroup>

        <RibbonGroup w={108} pad={6} label="Sensibilité">
          <Big w={96} icon={<SensitivityIcon />} lines={['Niveau de', 'confidentialité']} off arrow />
        </RibbonGroup>
        <Collapse aria-label="Réduire le ruban">
          <svg width="11" height="7" viewBox="0 0 11 7" fill="none" stroke="#444" strokeWidth="1.500"><path d="M1 6l4.500-4.500L10 6" /></svg>
        </Collapse>
      </Ribbon>

      <FormulaBar>
        <NameBox><BarInput aria-label="Zone Nom" defaultValue="B47" /><Triangle dir="down" /></NameBox>
        <BarDots />
        <BarButtons>
          <BarButton aria-label="Annuler">
            <svg width="12" height="12" viewBox="0 0 12 12" stroke="#b8b8b8" strokeWidth="1.800"><path d="M1 1l10 10M11 1 1 11" /></svg>
          </BarButton>
          <BarButton aria-label="Entrer">
            <svg width="13" height="12" viewBox="0 0 13 12" fill="none" stroke="#b8b8b8" strokeWidth="2"><path d="M1 6.500 4.500 10 12 1.500" /></svg>
          </BarButton>
          <BarButton aria-label="Insérer une fonction"><span>f<sub>x</sub></span></BarButton>
        </BarButtons>
        <FormulaBox>
          <BarInput aria-label="Barre de formule" />
          <svg width="8" height="6" viewBox="0 0 8 6" fill="none" stroke="#666" strokeWidth="2"><path d="M1 1l3 3 3-3" /></svg>
        </FormulaBox>
      </FormulaBar>

      <Work>
        <Sheet />
        <VScroll>
          <ScrollButton aria-label="Défiler vers le haut"><Triangle dir="up" /></ScrollButton>
          <Track $size={104} />
          <Thumb $size={432} />
          <Track $size={216} />
          <ScrollButton aria-label="Défiler vers le bas"><Triangle dir="down" /></ScrollButton>
        </VScroll>
      </Work>

      <Sheets>
        <SheetNav>
          <ToolButton aria-label="Feuille précédente"><Triangle dir="left" color="#bbb" /></ToolButton>
          <ToolButton aria-label="Feuille suivante"><Triangle dir="right" color={green} /></ToolButton>
        </SheetNav>
        {sheets.map((name, i) => (
          <SheetTab key={name} href="#" $active={i === 0}>{name}</SheetTab>
        ))}
        <More>...</More>
        <ToolButton aria-label="Nouvelle feuille">
          <svg width="17" height="17" viewBox="0 0 17 17" fill="none" stroke="#777"><circle cx="8.500" cy="8.500" r="7.500" /><path d="M8.500 4.500v8M4.500 8.500h8" strokeWidth="2" /></svg>
        </ToolButton>
        <BarDots />
        <HScroll>
          <ScrollButton aria-label="Défiler à gauche"><Triangle dir="left" /></ScrollButton>
          <Thumb $size={663} />
          <Track $size={37} />
          <ScrollButton aria-label="Défiler à droite"><Triangle dir="right" /></ScrollButton>
        </HScroll>
      </Sheets>
    </Window>
  )
}

export default App
